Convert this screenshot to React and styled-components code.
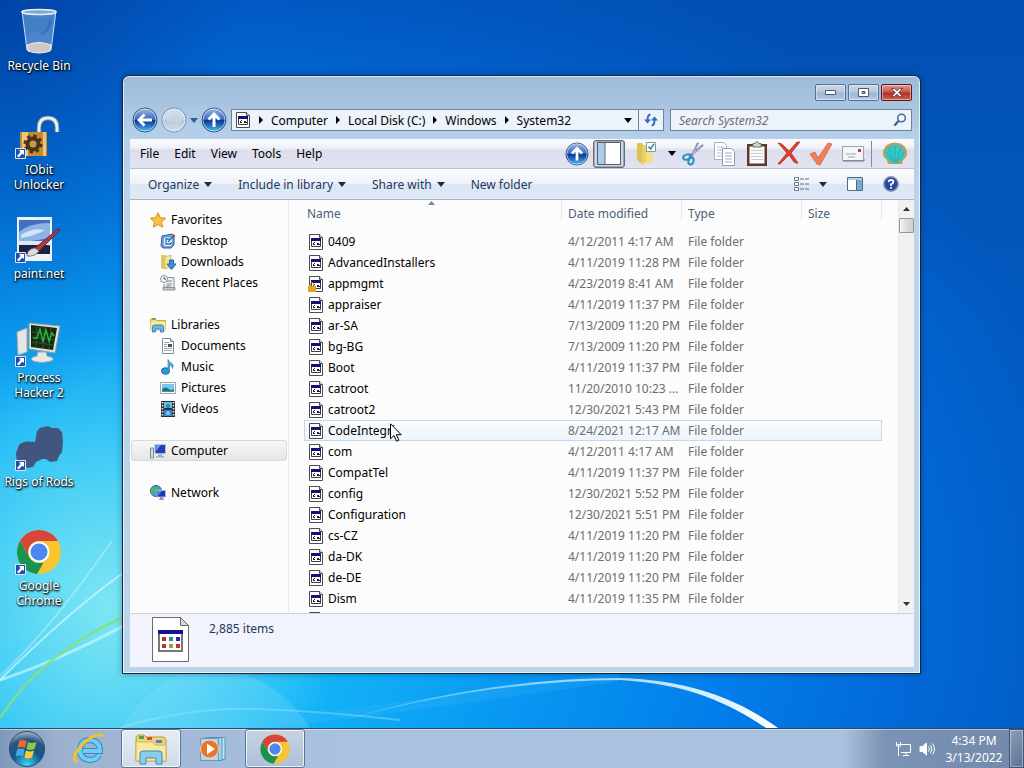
import React from "react";
import styled, { createGlobalStyle } from "styled-components";

const GlobalStyle = createGlobalStyle`
  * {
    box-sizing: border-box;
  }
  body {
    margin: 0;
    font-family: "Noto Sans", "Open Sans", sans-serif;
    font-size: 12px;
    line-height: 15px;
    color: #000;
  }
  button, input {
    font: inherit;
    color: inherit;
  }
  button {
    background: none;
    border: 0;
    padding: 0;
  }
  svg {
    display: block;
    flex: none;
  }
`;

const Desktop = styled.main`
  position: relative;
  display: flex;
  flex-direction: column;
  min-height: 100vh;
  overflow: hidden;
  background:
    radial-gradient(ellipse 230px 280px at 110px 610px, rgba(150, 240, 240, 0.75), rgba(90, 225, 250, 0) 100%),
    radial-gradient(ellipse 240px 420px at 0 0, rgba(0, 40, 130, 0.45), rgba(0, 60, 150, 0) 100%),
    linear-gradient(rgba(0, 64, 160, 0.35), rgba(0, 90, 190, 0) 40%),
    radial-gradient(ellipse 1000px 740px at 110px 600px, #30c8fa 0%, #14b6f8 22%, #0898f2 42%, #027eea 62%, #0269d8 80%, #0258be 100%);
`;

const Streaks = styled.svg`
  position: absolute;
  left: 0;
  bottom: 40px;
`;

const IconColumn = styled.div`
  position: relative;
  flex: 1;
  width: 78px;
`;

const Shortcut = styled.button`
  position: relative;
  display: flex;
  flex-direction: column;
  align-items: center;
  gap: 2px;
  width: 78px;
  height: 104px;
  padding-top: 8px;
  color: #fff;
  text-shadow: 0 1px 2px #000, 1px 1px 2px #000;
`;

const ShortcutLabel = styled.span`
  width: ${(props) => (props.$wide ? "78px" : "60px")};
  white-space: ${(props) => (props.$wide ? "nowrap" : "normal")};
`;

const ShortcutArrow = styled.svg`
  position: absolute;
  left: 15px;
  top: 44px;
`;

const Window = styled.section`
  position: absolute;
  top: 75px;
  left: 122px;
  right: 103px;
  bottom: 94px;
  display: flex;
  flex-direction: column;
  padding: 0 6px 6px 7px;
  border: 1px solid #16263c;
  border-radius: 7px 7px 0 0;
  background: linear-gradient(#9dbad8, #b6d0eb 62px, #bcd3ea 140px);
  box-shadow: inset 0 0 0 1px rgba(255, 255, 255, 0.7), 0 0 6px rgba(0, 20, 60, 0.35);
`;

const TitleBar = styled.div`
  display: flex;
  justify-content: flex-end;
  gap: 2px;
  height: 32px;
  padding: 8px 2px 0 0;
`;

const CaptionButton = styled.button`
  display: grid;
  place-items: center;
  width: 31px;
  height: 17px;
  border: 1px solid ${(props) => (props.$danger ? "#5a1720" : "#586f8e")};
  border-radius: 2px;
  background: ${(props) =>
    props.$danger
      ? "linear-gradient(#dc9c94, #c8564a 48%, #b03022 52%, #d0604a)"
      : "linear-gradient(#c9d9ea, #b4c9df 48%, #9cb5d0 52%, #b4cce6)"};
  box-shadow: inset 0 0 0 1px rgba(255, 255, 255, 0.45);
`;

const NavRow = styled.div`
  display: flex;
  align-items: center;
  height: 31px;
  padding: 0 2px 7px;
`;

const NavButtons = styled.div`
  display: flex;
  align-items: center;
  gap: 3px;
  width: 99px;
`;

const AddressBar = styled.nav`
  display: flex;
  align-items: center;
  flex: 1;
  height: 22px;
  padding-left: 3px;
  border: 1px solid #6e8299;
  background: #edf3fa;
`;

const Crumb = styled.button`
  display: flex;
  align-items: center;
  gap: 8px;
  margin-left: 8px;
  white-space: nowrap;
`;

const AddressEnd = styled.button`
  display: grid;
  place-items: center;
  width: ${(props) => props.$width}px;
  height: 20px;
  margin-left: ${(props) => (props.$push ? "auto" : "0")};
  border-left: ${(props) => (props.$push ? "0" : "1px solid #6e8299")};
`;

const SearchBox = styled.label`
  display: flex;
  align-items: center;
  width: 242px;
  height: 22px;
  margin-left: 6px;
  padding: 0 4px 0 8px;
  border: 1px solid #6e8299;
  background: #edf3fa;

  input {
    flex: 1;
    min-width: 0;
    padding: 0;
    border: 0;
    outline: 0;
    background: none;
  }
  input::placeholder {
    color: #6d6d6d;
    font-style: italic;
  }
`;

const Client = styled.div`
  display: flex;
  flex-direction: column;
  flex: 1;
  min-height: 0;
  background: #fcfcfc;
`;

const MenuBar = styled.div`
  display: flex;
  align-items: center;
  height: 30px;
  padding-left: 10px;
  border-bottom: 1px solid #b9c3d6;
  background: linear-gradient(#fcfcfe, #f0f1f9 30%, #dcdeed 40%, #e2e4f2);
`;

const Menus = styled.div`
  display: flex;
  gap: 15px;
  flex: 1;
`;

const ToolButton = styled.button`
  display: grid;
  place-items: center;
  width: ${(props) => props.$width || 32}px;
  height: 28px;
  border: ${(props) => (props.$pressed ? "1px solid #6a6c78" : "0")};
  border-radius: 3px;
  background: ${(props) => (props.$pressed ? "#d3d5e0" : "none")};
  box-shadow: ${(props) => (props.$pressed ? "inset 0 0 0 1px #a4a6b2" : "none")};
`;

const ToolDivider = styled.span`
  width: 1px;
  height: 26px;
  margin: 0 4px 0 2px;
  background: #85879a;
`;

const CommandBar = styled.div`
  display: flex;
  align-items: center;
  height: 31px;
  padding: 0 15px 0 18px;
  border-bottom: 1px solid #a3b4cc;
  background: linear-gradient(#fafcff, #eef3fb 48%, #dde6f3 52%, #dfe8f5);
  color: #1e395b;
`;

const Commands = styled.div`
  display: flex;
  gap: 26px;
  flex: 1;
`;

const Command = styled.button`
  display: flex;
  align-items: center;
  gap: 5px;
  white-space: nowrap;
`;

const CommandIcons = styled.div`
  display: flex;
  align-items: center;
  gap: 20px;
`;

const Body = styled.div`
  display: flex;
  flex: 1;
  min-height: 0;
`;

const Tree = styled.nav`
  width: 159px;
  padding: 9px 1px 0;
  border-right: 1px solid #e3e9f2;
`;

const TreeGroup = styled.div`
  margin-bottom: 21px;
`;

const TreeItem = styled.a`
  display: flex;
  align-items: center;
  gap: 5px;
  height: 21px;
  padding-left: ${(props) => (props.$nested ? 28 : 18)}px;
  border: 1px solid ${(props) => (props.$selected ? "#d9d9d9" : "transparent")};
  border-radius: 3px;
  background: ${(props) => (props.$selected ? "linear-gradient(#f8f8f8, #e5e5e5)" : "none")};
  color: #000;
  text-decoration: none;
  white-space: nowrap;
`;

const ListPane = styled.div`
  flex: 1;
  min-width: 0;
  overflow: hidden;
  padding: 0 16px 0 15px;
`;

const FileTable = styled.table`
  width: 100%;
  table-layout: fixed;
  border-collapse: separate;
  border-spacing: 0;
`;

const HeadCell = styled.th`
  position: relative;
  width: ${(props) => (props.$width ? `${props.$width}px` : "auto")};
  height: 31px;
  padding: 0 0 5px ${(props) => props.$indent}px;
  background: linear-gradient(#e2e8f0, #e8edf4) right top / 1px 21px no-repeat;
  color: #4c607a;
  font-weight: 400;
  text-align: left;

  svg {
    position: absolute;
    top: 1px;
    right: 127px;
  }
`;

const Cell = styled.td`
  height: 21px;
  padding: 0 0 0 6px;
  overflow: hidden;
  white-space: nowrap;
  color: #6d6d6d;
`;

const NameCell = styled(Cell)`
  padding-left: 4px;
  color: #000;
`;

const FileName = styled.span`
  display: flex;
  align-items: center;
  gap: 4px;
`;

const Row = styled.tr`
  background: ${(props) => (props.$hovered ? "linear-gradient(#fafcfe, #edf4fc)" : "none")};
  outline: ${(props) => (props.$hovered ? "1px solid #c4d7ea" : "none")};
  outline-offset: -1px;
`;

const ScrollBar = styled.div`
  display: flex;
  flex-direction: column;
  align-items: center;
  width: 16px;
  border-left: 1px solid #e8e8e8;
  background: #f1f1f1;
`;

const ScrollArrow = styled.button`
  display: grid;
  place-items: center;
  width: 15px;
  height: 18px;
`;

const ScrollThumb = styled.div`
  width: 15px;
  height: 15px;
  margin-bottom: auto;
  border: 1px solid #979797;
  border-radius: 1px;
  background: linear-gradient(90deg, #f5f5f5, #dcdcdc 50%, #cfcfd2);
`;

const DetailsPane = styled.footer`
  display: flex;
  gap: 19px;
  height: 54px;
  padding: 3px 0 0 22px;
  border-top: 1px solid #ccd4e2;
  background: #f1f4fd;
  color: #1e395b;
  line-height: 24px;
`;

const Pointer = styled.svg`
  position: absolute;
  left: 267px;
  top: 347px;
`;

const Taskbar = styled.footer`
  position: relative;
  display: flex;
  align-items: center;
  gap: 2px;
  height: 40px;
  border-top: 1px solid #2c4a6c;
  background: linear-gradient(90deg, #8199bb, #9cb1ce 60px, #a3bad8 200px, #a8c2df 340px, #a8c2df calc(100% - 180px), #7b93b4 calc(100% - 140px), #7289aa);
  box-shadow: inset 0 1px 0 rgba(255, 255, 255, 0.45);
`;

const StartButton = styled.button`
  width: 57px;
  padding-left: 8px;
`;

const TaskButton = styled.button`
  display: grid;
  place-items: center;
  width: 60px;
  height: 39px;
  border: ${(props) => (props.$open ? "1px solid #5d7596" : "0")};
  border-radius: 3px;
  background: ${(props) =>
    props.$open
      ? props.$active
        ? "linear-gradient(#e6edf5, #cfdbea)"
        : "linear-gradient(#c6d3e4, #adc0d8)"
      : "none"};
  box-shadow: ${(props) => (props.$open ? "inset 0 0 0 1px rgba(255, 255, 255, 0.75)" : "none")};
`;

const Tray = styled.div`
  display: flex;
  align-items: center;
  gap: 8px;
  margin-left: auto;
`;

const Clock = styled.time`
  width: 62px;
  line-height: 17px;
  color: #fff;
  text-align: center;
`;

const ShowDesktop = styled.button`
  width: 15px;
  height: 39px;
  margin-left: -4px;
  border: 1px solid #3f5675;
  background: linear-gradient(135deg, #8b9fbb, #5c7392);
  box-shadow: inset 0 0 0 1px rgba(255, 255, 255, 0.35);
`;

const Caret = ({ color = "#1e2c40" }) => (
  <svg width="8" height="5" viewBox="0 0 8 5">
    <path d="M0 0h8L4 5z" fill={color} />
  </svg>
);

const CrumbArrow = () => (
  <svg width="4" height="8" viewBox="0 0 4 8">
    <path d="M0 0l4 4-4 4z" fill="#000" />
  </svg>
);

const RoundArrow = ({ rotate = 0, size = 26, dim, id }) => (
  <svg width={size} height={size} viewBox="0 0 26 26">
    <defs>
      <linearGradient id={id} x2="0" y2="1">
        <stop offset="0" stopColor={dim ? "#d4dfeb" : "#a3bce4"} />
        <stop offset=".47" stopColor={dim ? "#c8d6e5" : "#3a6cc0"} />
        <stop offset=".52" stopColor={dim ? "#b4c7da" : "#0a3590"} />
        <stop offset="1" stopColor={dim ? "#d3e2f1" : "#4cc4f8"} />
      </linearGradient>
    </defs>
    <circle cx="13" cy="13" r="12" fill={`url(#${id})`} stroke={dim ? "#7890ab" : "#3a5684"} />
    <circle cx="13" cy="13" r="11" fill="none" stroke="#fff" strokeOpacity=".55" />
    <path
      transform={`rotate(${rotate} 13 13)`}
      d="M5 13l6.500-6.500 2 2-3 3H20v3h-9.500l3 3-2 2z"
      fill={dim ? "#c4d3e3" : "#fff"}
    />
  </svg>
);

const DllIcon = ({ locked }) => (
  <svg width="16" height="16" viewBox="0 0 16 16">
    <path d="M1.500.5h10l3 3v12h-13z" fill="#fff" stroke="#4c4c4c" />
    <path d="M11.500.5v3h3" fill="#ddd" stroke="#4c4c4c" />
    <path d="M3.500 4.500h9v8h-9z" fill="#fff" stroke="#3c3c58" />
    <path d="M3 4h10v3H3z" fill="#10107a" />
    <path d="M5 9h1v2H5zM6 8h1v1H6zM6 10h1v1H6zM9 9h2v2H9zM11 10h1v1h-1z" fill="#222" />
    {locked && (
      <g>
        <path d="M2 10V8.500a2 2 0 014 0V10" fill="none" stroke="#b98a1c" />
        <path d="M0 10h8v6H0z" fill="#e0a220" />
      </g>
    )}
  </svg>
);

const treeIcons = {
  star: (
    <path d="M8 .8l2.200 4.900 5.300.6-4 3.600 1.200 5.300L8 12.500l-4.700 2.700 1.200-5.300-4-3.600 5.300-.6z" fill="#fbc23c" stroke="#d38a18" />
  ),
  desktop: (
    <>
      <path d="M2 3l10-2 2 2v9l-3 3H3l-2-2z" fill="#6fa2d6" stroke="#2e5f98" />
      <rect x="4" y="4.500" width="8" height="8.500" rx="2" fill="#f1f7fd" />
      <path d="M9.500 6H6v5h5V9M8 9l6-6.500" stroke="#2a6fb4" strokeWidth="1.300" fill="none" />
      <path d="M12 1l3 1v3z" fill="#c8452c" />
    </>
  ),
  downloads: (
    <>
      <path d="M1 1h5v14H2l-1-2z" fill="#e3c766" />
      <path d="M5 3l6-2v12l-6 2z" fill="#f6e6a2" stroke="#dcc269" />
      <path d="M9.500 6h4v4H16l-4.500 5.500L7 10h2.500z" fill="#3f93de" stroke="#1c62a8" />
    </>
  ),
  recent: (
    <>
      <path d="M5 2.500h9v11H4V9" fill="#eceff1" stroke="#8b9296" />
      <path d="M7 6h5M7 9h5M6 11h5" stroke="#7d858a" />
      <path d="M3 12.500h12v2.500H3z" fill="#c2c8cb" stroke="#8b9296" />
      <circle cx="4" cy="4" r="3.500" fill="#f4f6f7" stroke="#8b9296" />
      <path d="M4 2v2h2" stroke="#555" fill="none" />
    </>
  ),
  libraries: (
    <>
      <path d="M.5 2h5l1 1.500h9V13H.5z" fill="#f3dd86" stroke="#c8ab48" />
      <path d="M2 1h4v2H2z" fill="#74b04a" />
      <path d="M.5 5h15v8H.5z" fill="#f8e9a8" />
      <path d="M2.500 15V10q0-2 2-2h7q2 0 2 2v5h-3v-3h-5v3z" fill="#6db7e4" stroke="#3a86bd" />
    </>
  ),
  documents: (
    <>
      <path d="M2.500.5h8l3 3v12h-11z" fill="#fff" stroke="#828a92" />
      <path d="M10.500.5v3h3" fill="#dde1e5" stroke="#828a92" />
      <path d="M4 4.500h5M4 6.500h3M4 8.500h3M4 10.500h8M4 12.500h8" stroke="#9aa6b2" />
      <path d="M8 6h4v3H8z" fill="#2f5674" />
    </>
  ),
  music: (
    <>
      <ellipse cx="5.500" cy="12" rx="4" ry="3.300" fill="#2e96d8" stroke="#1a6aa6" />
      <path d="M8 12V.5q1 3 4 4 2 1.500.5 5 0-3-3-3.500V12z" fill="#4fb0e4" stroke="#2479b4" strokeWidth=".6" />
    </>
  ),
  pictures: (
    <>
      <path d="M.5 2.500h15v11H.5z" fill="#fff" stroke="#9aa4ae" />
      <path d="M2 4h12v8H2z" fill="#7cc6ee" />
      <path d="M2 9q4-3 7 0t5-1v4H2z" fill="#1f6d96" />
      <path d="M2 11h12v1H2z" fill="#48a069" />
    </>
  ),
  videos: (
    <>
      <path d="M1 0h14v16H1z" fill="#2b3138" />
      <path d="M4 1h8v6H4z" fill="#5ec0e4" />
      <path d="M4 9h8v6H4z" fill="#3f86d0" />
      <circle cx="8" cy="5" r="2" fill="#2b8798" />
      <circle cx="8" cy="12" r="2" fill="#7cc8f0" />
      <path d="M2.500 1v14M13.500 1v14" stroke="#e8edf0" strokeWidth="1.500" strokeDasharray="1.500 1.500" />
    </>
  ),
  computer: (
    <>
      <path d="M.5 5h3v10h-3z" fill="#d4dad9" stroke="#7d8888" />
      <path d="M5 1.500h10.500v9H5z" fill="#1c3fc0" stroke="#b5bfcc" />
      <path d="M6 2h5L6 8z" fill="#6f96ee" />
      <path d="M8 11h4v2h2v1.500H6V13h2z" fill="#a6b2c0" />
    </>
  ),
  network: (
    <>
      <circle cx="6" cy="6" r="5.500" fill="#3f9fd8" stroke="#21689c" />
      <path d="M2 3q3-2 4 1t-2 3 0 4Q0 9 1 5zM8 2l3 2-1 3-2-2z" fill="#4fba50" />
      <path d="M7 5.500h8.500v6.500H7z" fill="#1734ba" stroke="#aab8d4" />
      <path d="M8 6h4l-4 5z" fill="#557ce4" />
      <path d="M10 12h3v2h1v1H9v-1h1z" fill="#8a9ab0" />
    </>
  ),
};

const TreeIcon = ({ name }) => (
  <svg width="16" height="16" viewBox="0 0 16 16">
    {treeIcons[name]}
  </svg>
);

const chromeArt = (
  <>
    <circle cx="24" cy="24" r="22" fill="#f7c52f" />
    <path d="M5 13A22 22 0 0143 13H24a11 11 0 00-9.500 16.500z" fill="#d8453a" />
    <path d="M5 13l9.500 16.500A11 11 0 0024 35h4.500L22 46A22 22 0 015 13z" fill="#1a9351" />
    <circle cx="24" cy="24" r="10.500" fill="#fff" />
    <circle cx="24" cy="24" r="8.500" fill="#4c86ee" />
  </>
);

const desktopArt = {
  bin: (
    <>
      <path d="M7 3l5 39q12 5 24 0l5-39q-17 5-34 0z" fill="#a9cbee" fillOpacity=".45" stroke="#c9dbee" />
      <path d="M9 8l2 20q6-6 10-4t14-2l3-14q-15 4-29 0z" fill="#3a78c4" fillOpacity=".5" />
      <ellipse cx="24" cy="4" rx="17" ry="2.500" fill="#7fa8d6" stroke="#e6eef6" strokeWidth="1.500" />
      <path d="M12 37q12-5 24 0l-1 6q-11 4-22 0z" fill="#cfc9c4" stroke="#eee" />
      <path d="M36 12q-2 12-10 14" stroke="#2f6cb4" strokeOpacity=".6" strokeWidth="3" fill="none" />
    </>
  ),
  lock: (
    <>
      <path d="M24 22V16q0-10 9-10 9 0 9 10v4" fill="none" stroke="#8c9aa4" strokeWidth="4.500" />
      <path d="M24 22V16q0-10 9-10 9 0 9 10v4" fill="none" stroke="#eef1f3" strokeWidth="2.500" />
      <path d="M5 20h27v24H5z" fill="#c68c34" />
      <path d="M7 20h6v24H7zM28 20h3v24h-3z" fill="#edc479" />
      <circle cx="18" cy="32" r="7.500" fill="#4a3418" stroke="#4a3418" strokeWidth="4" strokeDasharray="3 2.900" />
      <circle cx="18" cy="32" r="3.500" fill="#c69a52" />
    </>
  ),
  paint: (
    <>
      <path d="M2 1h35v44H2z" fill="#eef1f8" />
      <path d="M4 4h31v34H4z" fill="#3f70c4" />
      <path d="M4 16q10-9 31-9v15L4 27z" fill="#8db4e6" />
      <path d="M6 19q12-8 24-5-8 5-24 8z" fill="#d2e4f8" />
      <path d="M4 28l14-2 17 4v8H4z" fill="#1b2244" />
      <path d="M4 25h31v4H4z" fill="#dbe8f6" />
      <path d="M20 32L43 13l2 1-21 21z" fill="#b23a3e" stroke="#762026" />
      <path d="M12 40q0-7 8-8l4 3q-4 6-12 5z" fill="#dcdcdc" stroke="#777" />
    </>
  ),
  monitor: (
    <>
      <path d="M2 12l10-4v24L3 35z" fill="#e4e6e4" stroke="#a5aaa6" />
      <path d="M14 3l31 3-5 27-26-4z" fill="#dfe2de" stroke="#969c96" />
      <path d="M16 5l26 3-4 22-22-3z" fill="#152a14" />
      <path d="M17 12l24 3M17 17l23 3M17 22l22 3M22 6l-1 21M29 7l-1 21M36 8l-2 21" stroke="#28582a" fill="none" />
      <path d="M18 18h4l3-9 3 13 3-12 3 11 3-8 2 3" stroke="#2fae3a" fill="none" strokeWidth="1.500" />
      <path d="M23 32h8l1 4q10 2 4 5-10 3-18 0-5-3 4-5z" fill="#e6e8e6" stroke="#a5aaa6" />
    </>
  ),
  rods: (
    <path
      d="M1 29l3-8q4-5 16-3l2-11 3-3 8-2 4 2h6l4 4 1 10-1 10-3 4-2 5-7 1-4-3h-4l-6 3-3 5-6 1-4-5-6 1z"
      fill="#41557e"
    />
  ),
  chrome: chromeArt,
};

const shortcuts = [
  { label: "Recycle Bin", art: "bin", wide: true, pinned: true },
  { label: "IObit Unlocker", art: "lock" },
  { label: "paint.net", art: "paint" },
  { label: "Process Hacker 2", art: "monitor" },
  { label: "Rigs of Rods", art: "rods", wide: true },
  { label: "Google Chrome", art: "chrome" },
];

const crumbs = ["Computer", "Local Disk (C:)", "Windows", "System32"];
const menus = ["File", "Edit", "View", "Tools", "Help"];

const toolIcons = {
  pane: (
    <>
      <path d="M1.500 1.500h23v22h-23z" fill="#fff" stroke="#4a6078" />
      <path d="M2 2h7v21H2z" fill="#a8cde4" />
      <path d="M9 2v21" stroke="#5b7590" />
    </>
  ),
  folder: (
    <>
      <path d="M4 2h5l2 3v18l-5-2-2-3z" fill="#e0c250" />
      <path d="M9 6l11 6v10H10z" fill="#f3e086" />
      <path d="M9 6l4-2v16l-4 4z" fill="#ead06a" />
      <path d="M13.500 1.500h9v9h-9z" fill="#fff" stroke="#8793a0" />
      <path d="M15.500 5.500l2 2.500 3.500-5" fill="none" stroke="#2c8a9c" strokeWidth="1.500" />
    </>
  ),
  cut: (
    <>
      <path d="M18 2L11 17M23 4L9 16" stroke="#6c7ba0" strokeWidth="2" />
      <path d="M18 3l-6 12M22 5l-8 7" stroke="#d4dbe8" strokeWidth=".8" />
      <ellipse cx="7" cy="16" rx="4" ry="2.500" transform="rotate(-20 7 16)" fill="none" stroke="#2a8fc0" strokeWidth="2" />
      <ellipse cx="11" cy="20" rx="2.500" ry="3.500" transform="rotate(20 11 20)" fill="none" stroke="#2a8fc0" strokeWidth="2" />
    </>
  ),
  copy: (
    <>
      <path d="M2.500 1.500h9l3 3v14h-12z" fill="#fff" stroke="#a7b2c0" />
      <path d="M5 6h7M5 9h5M5 12h5M5 15h5" stroke="#a8bfd8" />
      <path d="M10.500 7.500h9l3 3v14h-12z" fill="#fff" stroke="#8f9cac" />
      <path d="M13 12h7M13 15h7M13 18h7M13 21h7" stroke="#92b0d0" />
    </>
  ),
  paste: (
    <>
      <path d="M3 3h20v22H3z" fill="#5c3b26" />
      <path d="M5.500 5.500h15v17h-15z" fill="#fdfdfd" />
      <path d="M7 9.500h12M7 12.500h12M7 15.500h12M7 18.500h12" stroke="#c3cad2" />
      <path d="M9 2.500h2q2-3.500 4 0h2V6H9z" fill="#d2d6cf" stroke="#6f7268" />
    </>
  ),
  remove: (
    <path d="M2 2q3 0 5 2l6 6 8-9h3L15 12l7 10q-1 1-4-1l-5-7-9 9H2l9-11z" fill="#e0402c" stroke="#a82418" strokeWidth=".7" />
  ),
  apply: (
    <path d="M2 13l5-2 3 6L20 2l4 1-12 21-3-1z" fill="#f08055" stroke="#cc5c38" strokeWidth=".7" />
  ),
  mail: (
    <>
      <path d="M2.500 5.500h21v14h-21z" fill="#f3f5f7" stroke="#9da5ae" />
      <path d="M3 20h21v-2" stroke="#6f7780" fill="none" />
      <path d="M6 13h10M8 16h7" stroke="#9aa6b4" />
      <path d="M18 8h3v3h-3z" fill="#bb3c3c" />
    </>
  ),
  shell: (
    <>
      <path d="M6 23l-1-4q-5-3-4-9Q3 2 13 1.500 23 2 25 10q1 6-4 9l-1 4z" fill="#cf9a4c" />
      <path d="M7 20q-5-4-4-9Q5 4 13 3.500 21 4 23 11q1 5-4 9l-6 3z" fill="#36c6c4" />
      <path d="M13 22V5M12 22L7 6M14 22l5-16M11 21L4 11M15 21l7-10" stroke="#22a0b0" strokeWidth=".6" />
    </>
  ),
};

const ToolIcon = ({ name }) => (
  <svg width="26" height="26" viewBox="0 0 26 26">
    {toolIcons[name]}
  </svg>
);

const tree = [
  [
    { label: "Favorites", icon: "star" },
    { label: "Desktop", icon: "desktop", nested: true },
    { label: "Downloads", icon: "downloads", nested: true },
    { label: "Recent Places", icon: "recent", nested: true },
  ],
  [
    { label: "Libraries", icon: "libraries" },
    { label: "Documents", icon: "documents", nested: true },
    { label: "Music", icon: "music", nested: true },
    { label: "Pictures", icon: "pictures", nested: true },
    { label: "Videos", icon: "videos", nested: true },
  ],
  [{ label: "Computer", icon: "computer", selected: true }],
  [{ label: "Network", icon: "network" }],
];

const files = [
  ["0409", "4/12/2011 4:17 AM"],
  ["AdvancedInstallers", "4/11/2019 11:28 PM"],
  ["appmgmt", "4/23/2019 8:41 AM"],
  ["appraiser", "4/11/2019 11:37 PM"],
  ["ar-SA", "7/13/2009 11:20 PM"],
  ["bg-BG", "7/13/2009 11:20 PM"],
  ["Boot", "4/11/2019 11:37 PM"],
  ["catroot", "11/20/2010 10:23 ..."],
  ["catroot2", "12/30/2021 5:43 PM"],
  ["CodeIntegri", "8/24/2021 12:17 AM"],
  ["com", "4/12/2011 4:17 AM"],
  ["CompatTel", "4/11/2019 11:37 PM"],
  ["config", "12/30/2021 5:52 PM"],
  ["Configuration", "12/30/2021 5:51 PM"],
  ["cs-CZ", "4/11/2019 11:20 PM"],
  ["da-DK", "4/11/2019 11:20 PM"],
  ["de-DE", "4/11/2019 11:20 PM"],
  ["Dism", "4/11/2019 11:35 PM"],
  ["", ""],
];

function Wallpaper() {
  return (
    <Streaks width="1024" height="728" viewBox="0 0 1024 728" fill="none">
      <defs>
        <linearGradient id="arc" gradientUnits="userSpaceOnUse" x1="280" y1="0" x2="780" y2="0">
          <stop offset="0" stopColor="#fff" stopOpacity="0" />
          <stop offset=".55" stopColor="#c8f0ff" stopOpacity=".7" />
          <stop offset="1" stopColor="#fff" />
        </linearGradient>
      </defs>
      <path d="M0 680Q60 660 125 625" stroke="#d4fbff" strokeOpacity=".6" strokeWidth="3" />
      <path d="M0 680Q70 610 130 568" stroke="#e4fdff" strokeOpacity=".6" strokeWidth="2" />
      <path d="M0 676Q50 630 112 541" stroke="#fff" strokeOpacity=".3" strokeWidth="2" />
      <path d="M0 718Q40 655 125 616" stroke="#86e07c" strokeWidth="2" />
      <path d="M120 728Q160 672 200 670 270 665 310 728z" fill="#9be4ff" fillOpacity=".2" />
      <path d="M120 728Q190 706 260 709T400 720" stroke="#9fe6ff" strokeOpacity=".4" strokeWidth="2" />
      <path d="M280 722Q460 700 620 676" stroke="#5cc4ff" strokeOpacity=".15" strokeWidth="10" />
      <path d="M330 724Q480 678 620 678C690 680 740 700 778 728h-12C730 704 690 684 620 680Q480 681 330 724z" fill="url(#arc)" />
    </Streaks>
  );
}

function DesktopIcons() {
  return (
    <IconColumn>
      {shortcuts.map((item) => (
        <Shortcut key={item.label}>
          <svg width="48" height="48" viewBox="0 0 48 48">
            {desktopArt[item.art]}
          </svg>
          {!item.pinned && (
            <ShortcutArrow width="11" height="11" viewBox="0 0 11 11">
              <path d="M.5.5h10v10H.5z" fill="#234fae" stroke="#dce6f6" />
              <path d="M4 2h5v5L7.500 5.500 4 9H2.500V7.500L5.500 4z" fill="#fff" />
            </ShortcutArrow>
          )}
          <ShortcutLabel $wide={item.wide}>{item.label}</ShortcutLabel>
        </Shortcut>
      ))}
    </IconColumn>
  );
}

function Explorer() {
  return (
    <Window aria-label="System32">
      <TitleBar>
        <CaptionButton aria-label="Minimize">
          <svg width="11" height="5" viewBox="0 0 11 5">
            <path d="M.5.5h10v4H.5z" fill="#fff" stroke="#4b5a70" />
          </svg>
        </CaptionButton>
        <CaptionButton aria-label="Maximize">
          <svg width="11" height="9" viewBox="0 0 11 9">
            <path d="M.5.500h10v8H.5zM4 3.500h3v2H4z" fill="#fff" stroke="#4b5a70" fillRule="evenodd" />
          </svg>
        </CaptionButton>
        <CaptionButton $danger aria-label="Close">
          <svg width="12" height="9" viewBox="0 0 12 9">
            <path d="M.5.500h3L6 2.800 8.500.5h3L7.700 4.500l3.800 4h-3L6 6.200 3.500 8.500h-3l3.800-4z" fill="#fff" stroke="#5c3038" strokeWidth=".8" />
          </svg>
        </CaptionButton>
      </TitleBar>
      <NavRow>
        <NavButtons>
          <button aria-label="Back">
            <RoundArrow id="back" />
          </button>
          <button aria-label="Forward">
            <RoundArrow id="forward" rotate={180} dim />
          </button>
          <button aria-label="Recent pages">
            <Caret color="#2c5c94" />
          </button>
          <button aria-label="Up">
            <RoundArrow id="up" rotate={90} />
          </button>
        </NavButtons>
        <AddressBar aria-label="Address">
          <DllIcon />
          {crumbs.map((crumb) => (
            <Crumb key={crumb}>
              <CrumbArrow />
              {crumb}
            </Crumb>
          ))}
          <AddressEnd $push $width={20} aria-label="Previous locations">
            <Caret color="#000" />
          </AddressEnd>
          <AddressEnd $width={25} aria-label="Refresh">
            <svg width="14" height="14" viewBox="0 0 14 14">
              <path d="M6.500 1.500q-3 0-3 6M7.500 12.500q3 0 3-6" stroke="#2f6cb4" strokeWidth="2" fill="none" />
              <path d="M0 6.500h7L3.500 10.500zM7 7.500h7L10.500 3.500z" fill="#2f6cb4" />
            </svg>
          </AddressEnd>
        </AddressBar>
        <SearchBox>
          <input type="search" aria-label="Search System32" placeholder="Search System32" />
          <svg width="14" height="14" viewBox="0 0 14 14">
            <circle cx="8.500" cy="5" r="3.800" fill="#f4faff" stroke="#44689a" strokeWidth="1.500" />
            <path d="M5.500 8L1.500 12.500" stroke="#3a5c90" strokeWidth="2.200" />
          </svg>
        </SearchBox>
      </NavRow>
      <Client>
        <MenuBar>
          <Menus>
            {menus.map((menu) => (
              <button key={menu}>{menu}</button>
            ))}
          </Menus>
          <ToolButton aria-label="Up one level">
            <RoundArrow id="toolUp" rotate={90} size={24} />
          </ToolButton>
          <ToolButton $pressed aria-label="Navigation pane">
            <ToolIcon name="pane" />
          </ToolButton>
          <ToolButton $width={42} aria-label="Folder options">
            <ToolIcon name="folder" />
          </ToolButton>
          <ToolButton $width={10} aria-label="More folder options">
            <Caret color="#000" />
          </ToolButton>
          <ToolButton aria-label="Cut">
            <ToolIcon name="cut" />
          </ToolButton>
          <ToolButton aria-label="Copy">
            <ToolIcon name="copy" />
          </ToolButton>
          <ToolButton aria-label="Paste">
            <ToolIcon name="paste" />
          </ToolButton>
          <ToolButton aria-label="Delete">
            <ToolIcon name="remove" />
          </ToolButton>
          <ToolButton aria-label="Properties">
            <ToolIcon name="apply" />
          </ToolButton>
          <ToolButton aria-label="E-mail">
            <ToolIcon name="mail" />
          </ToolButton>
          <ToolDivider />
          <ToolButton $width={38} aria-label="Classic shell">
            <ToolIcon name="shell" />
          </ToolButton>
        </MenuBar>
        <CommandBar>
          <Commands>
            <Command>
              Organize <Caret />
            </Command>
            <Command>
              Include in library <Caret />
            </Command>
            <Command>
              Share with <Caret />
            </Command>
            <Command>New folder</Command>
          </Commands>
          <CommandIcons>
            <Command aria-label="Change your view">
              <svg width="20" height="14" viewBox="0 0 20 14">
                <path d="M.5.5h4v3h-4zM.5 5.500h4v3h-4zM.5 10.500h4v3h-4z" fill="#fff" stroke="#66788e" />
                <path d="M6 2h10M6 7h10M6 12h10" stroke="#5a6c84" strokeDasharray="4 1" />
              </svg>
              <Caret />
            </Command>
            <button aria-label="Preview pane">
              <svg width="16" height="14" viewBox="0 0 16 14">
                <path d="M.5.5h15v13H.5z" fill="#fff" stroke="#4f6a8a" />
                <path d="M1 1h14v2H1z" fill="#b9cce0" />
                <path d="M9.500 3v10.500" stroke="#4f6a8a" />
                <path d="M10 3h5v10h-5z" fill="#74aacb" />
              </svg>
            </button>
            <button aria-label="Help">
              <svg width="16" height="16" viewBox="0 0 16 16">
                <circle cx="8" cy="8" r="7.200" fill="#2646a0" stroke="#8796b8" strokeWidth="1.500" />
                <path d="M5.500 6.200Q5.700 4 8 4t2.400 2Q10.400 7.200 8 8.300V10M8 11v1.800" fill="none" stroke="#fff" strokeWidth="1.800" />
              </svg>
            </button>
          </CommandIcons>
        </CommandBar>
        <Body>
          <Tree>
            {tree.map((group) => (
              <TreeGroup key={group[0].label}>
                {group.map((item) => (
                  <TreeItem key={item.label} href="#" $nested={item.nested} $selected={item.selected}>
                    <TreeIcon name={item.icon} />
                    {item.label}
                  </TreeItem>
                ))}
              </TreeGroup>
            ))}
          </Tree>
          <ListPane>
            <FileTable>
              <thead>
                <tr>
                  <HeadCell $indent={3}>
                    Name
                    <svg width="7" height="4" viewBox="0 0 7 4">
                      <path d="M0 4h7L3.500 0z" fill="#7186a0" />
                    </svg>
                  </HeadCell>
                  <HeadCell $indent={6} $width={120}>Date modified</HeadCell>
                  <HeadCell $indent={6} $width={120}>Type</HeadCell>
                  <HeadCell $indent={6} $width={80}>Size</HeadCell>
                </tr>
              </thead>
              <tbody>
                {files.map(([name, date]) => (
                  <Row key={name} $hovered={name === "CodeIntegri"}>
                    <NameCell>
                      <FileName>
                        <DllIcon locked={name === "appmgmt"} />
                        {name}
                      </FileName>
                    </NameCell>
                    <Cell>{date}</Cell>
                    <Cell>{name && "File folder"}</Cell>
                    <Cell />
                  </Row>
                ))}
              </tbody>
            </FileTable>
          </ListPane>
          <ScrollBar>
            <ScrollArrow aria-label="Scroll up">
              <svg width="7" height="4" viewBox="0 0 7 4">
                <path d="M0 4h7L3.500 0z" fill="#333" />
              </svg>
            </ScrollArrow>
            <ScrollThumb />
            <ScrollArrow aria-label="Scroll down">
              <svg width="7" height="4" viewBox="0 0 7 4">
                <path d="M0 0h7L3.500 4z" fill="#333" />
              </svg>
            </ScrollArrow>
          </ScrollBar>
        </Body>
        <DetailsPane>
          <svg width="38" height="46" viewBox="0 0 38 46">
            <path d="M.5.5h28l8 8v36H.5z" fill="#fff" stroke="#6c6c6c" />
            <path d="M28.500.5v8h8z" fill="#d8d8d8" stroke="#6c6c6c" />
            <path d="M7 14h23v20H7z" fill="#fff" stroke="#777" strokeWidth="2" />
            <path d="M6 13h25v4H6z" fill="#14148c" />
            <path d="M10 20h4v4h-4zM24 27h4v4h-4zM10 27h4v4h-4z" fill="#b8323a" />
            <path d="M17 20h4v4h-4z" fill="#2c8a9c" />
            <path d="M24 20h4v4h-4z" fill="#2a2aa8" />
            <path d="M17 27h4v4h-4z" fill="#a0a030" />
          </svg>
          2,885 items
        </DetailsPane>
      </Client>
      <Pointer width="12" height="19" viewBox="0 0 12 19">
        <path d="M.5.800v15l3.500-3.300 2.500 5.700 2.400-1-2.500-5.500h4.800z" fill="#fff" stroke="#000" />
      </Pointer>
    </Window>
  );
}

function TaskbarPanel() {
  return (
    <Taskbar>
      <StartButton aria-label="Start">
        <svg width="38" height="38" viewBox="0 0 38 38">
          <defs>
            <radialGradient id="orb" cx=".5" cy=".95" r=".95">
              <stop offset="0" stopColor="#40d8f0" />
              <stop offset=".45" stopColor="#14568c" />
              <stop offset=".75" stopColor="#2c5580" />
              <stop offset="1" stopColor="#a8bdd0" />
            </radialGradient>
          </defs>
          <circle cx="19" cy="19" r="17.500" fill="url(#orb)" stroke="#28486c" />
          <path d="M11 11q4-2 7.500 0l-1.500 7q-4-2-7.500 0z" fill="#ee6a2c" />
          <path d="M20 12q4 2 8.500 0l-2 7q-4 2-8 0z" fill="#8ccb3c" />
          <path d="M9 19.500q4-2 7.500 0l-1.500 7q-4-2-7.500 0z" fill="#4aa4ea" />
          <path d="M18 20.500q4 2 8 0l-2 7q-4 2-7.500 0z" fill="#fccb30" />
        </svg>
      </StartButton>
      <TaskButton aria-label="Internet Explorer">
        <svg width="34" height="34" viewBox="0 0 34 34" fill="none">
          <path d="M27 23Q24 28 18 28 8 27 8 18 9 8 18 8q10 1 10 11H11" stroke="#2b8ccc" strokeWidth="6" />
          <path d="M27 23Q24 28 18 28 8 27 8 18 9 8 18 8q10 1 10 11H11" stroke="#72ccf4" strokeWidth="4" />
          <path d="M5 30Q-2 27 9 14 22 0 31 4" stroke="#f0c22c" strokeWidth="3" />
        </svg>
      </TaskButton>
      <TaskButton $open $active aria-label="Windows Explorer">
        <svg width="34" height="32" viewBox="0 0 34 32">
          <path d="M2 4l2-2h6l2 2h18l2 2v22H2z" fill="#ecd27a" stroke="#bc9a3a" />
          <path d="M5 3h5v3H5z" fill="#48a448" />
          <path d="M13 4h5v3h-5z" fill="#d05038" />
          <path d="M22 7h6v3h-6z" fill="#5080c0" />
          <path d="M2 9h17l2 3h11v16H2z" fill="#f8e9a2" stroke="#d0b458" />
          <path d="M6 31V21q0-3 3-3h16q3 0 3 3v10h-6v-6H12v6z" fill="#8accec" stroke="#3c8cbc" />
        </svg>
      </TaskButton>
      <TaskButton aria-label="Windows Media Player">
        <svg width="28" height="26" viewBox="0 0 28 26">
          <path d="M9 1.500h17v22H9z" fill="#c2e4f4" stroke="#4a98c4" />
          <path d="M6 1.500h17v23H6z" fill="#a4d2ea" stroke="#4a98c4" />
          <path d="M1.500 2.500h18v22h-18z" fill="#c0d2e4" stroke="#6c98bc" />
          <circle cx="10.500" cy="13" r="9" fill="#ea7424" stroke="#d8d8d8" />
          <path d="M8 7.500l8 5.500-8 5.500z" fill="#fff" />
        </svg>
      </TaskButton>
      <TaskButton $open aria-label="Chrome">
        <svg width="32" height="32" viewBox="0 0 48 48">
          {chromeArt}
        </svg>
      </TaskButton>
      <Tray>
        <svg width="16" height="16" viewBox="0 0 16 16" fill="none" stroke="#fff">
          <path d="M6 3.500h9.500v8H6M8 14.500h6M11 12v2" />
          <path d="M1.500 1v4h4V1M3.500 5v10M1.500 3.500h4" />
        </svg>
        <svg width="16" height="16" viewBox="0 0 16 16" fill="none" stroke="#fff">
          <path d="M1 5.500h2.500L7.500 2v12L3.500 10.500H1z" fill="#fff" />
          <path d="M9.500 5.500q2 2.500 0 5M11.500 4q3 4 0 8M13.500 2.500q4 5.500 0 11" />
        </svg>
        <Clock>
          4:34 PM
          <br />
          3/13/2022
        </Clock>
        <ShowDesktop aria-label="Show desktop" />
      </Tray>
    </Taskbar>
  );
}

function App() {
  return (
    <Desktop>
      <GlobalStyle />
      <Wallpaper />
      <DesktopIcons />
      <Explorer />
      <TaskbarPanel />
    </Desktop>
  );
}

export default App;
